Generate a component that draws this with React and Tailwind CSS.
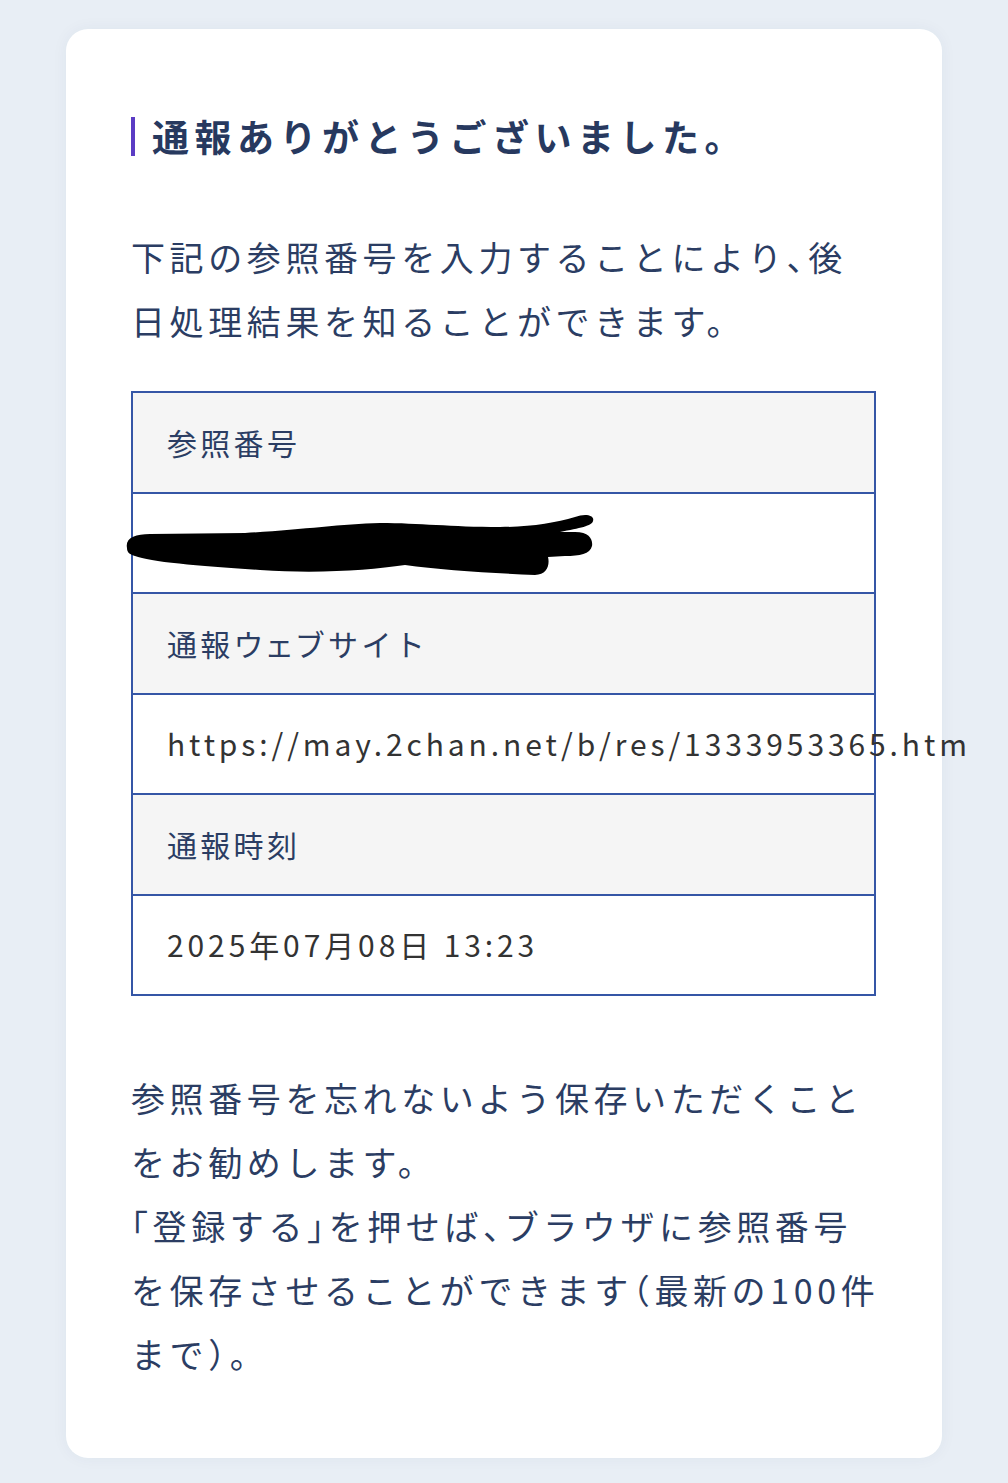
export default function App() {
  const font = { fontFamily: '"Noto Sans CJK JP", "Noto Sans", sans-serif' };
  const H = ({ children }) => <span className="[font-feature-settings:'halt']">{children}</span>;
  return (
    <div className="min-h-[1483px] w-full bg-[#e8eef5] pt-[29px] pb-[25px]" style={font}>
      <div className="ml-[66px] w-[876px] rounded-[22px] bg-white pl-[65px] pr-[66px] pt-[83px] pb-[72px] shadow-[0_0_16px_rgba(40,60,90,0.05)]">
        <div className="flex h-[48px] items-center">
          <div className="h-[39px] w-[4px] bg-[#5b3cc4]" />
          <h1 className="ml-[17px] whitespace-nowrap text-[37px] font-bold leading-[48px] tracking-[5.5px] text-[#27395f]">
            通報ありがとうございました。
          </h1>
        </div>

        <p className="mt-[65px] whitespace-nowrap text-[34px] leading-[64px] tracking-[4.6px] text-[#2b3d63]">
          下記の参照番号を入力することにより<H>、</H>後
          <br />
          日処理結果を知ることができます。
        </p>

        <div className="mt-[38px] w-[745px] border-2 border-[#3556a6] text-[30px]">
          <div className="flex h-[98.5px] items-center bg-[#f5f5f5] pl-[34px] tracking-[3.3px] text-[#2b3d63]">参照番号</div>
          <div className="relative h-[100.5px] border-t-2 border-[#3556a6] bg-white">
            <svg
              className="absolute left-[-13px] top-0"
              width="480"
              height="98"
              viewBox="120 494 480 98"
            >
              <path
                fill="#000"
                d="M 127 548 C 125 538, 135 534, 150 534 L 245 533 C 300 530, 340 524, 380 523 C 420 523, 450 527, 500 527 C 530 527, 555 523, 575 517 C 585 513, 595 515, 593 521 C 592 526, 580 528, 560 532 L 575 532 C 590 532, 593 540, 592 546 C 590 554, 580 556, 565 556 L 548 557 C 550 565, 547 575, 535 575 C 490 573, 440 570, 405 565 C 370 570, 320 574, 260 570 C 200 566, 150 562, 135 556 C 128 554, 127 551, 127 548 Z"
              />
            </svg>
          </div>
          <div className="flex h-[100.5px] items-center border-t-2 border-[#3556a6] bg-[#f5f5f5] pl-[34px] tracking-[3.3px] text-[#2b3d63]">
            通報ウ<span className="[font-feature-settings:'palt']">ェ</span>ブサイト
          </div>
          <div className="flex h-[100.5px] items-center whitespace-nowrap border-t-2 border-[#3556a6] bg-white pl-[34px] tracking-[3.9px] text-[#333333]">
            https://may.2chan.net/b/res/1333953365.htm
          </div>
          <div className="flex h-[100.5px] items-center border-t-2 border-[#3556a6] bg-[#f5f5f5] pl-[34px] tracking-[3.3px] text-[#2b3d63]">
            通報時刻
          </div>
          <div className="flex h-[100.5px] items-center border-t-2 border-[#3556a6] bg-white pl-[34px] tracking-[3.9px] text-[#333333]">
            2025年07月08日 13:23
          </div>
        </div>

        <p className="mt-[70px] whitespace-nowrap text-[34px] leading-[64px] tracking-[4.6px] text-[#2b3d63]">
          参照番号を忘れないよう保存いただくこと
          <br />
          をお勧めします。
          <br />
          <H>「</H>登録する<H>」</H>を押せば<H>、</H>ブラウザに参照番号
          <br />
          を保存させることができます<H>（</H>最新の100件
          <br />
          まで<H>）</H>。
        </p>
      </div>
    </div>
  );
}
